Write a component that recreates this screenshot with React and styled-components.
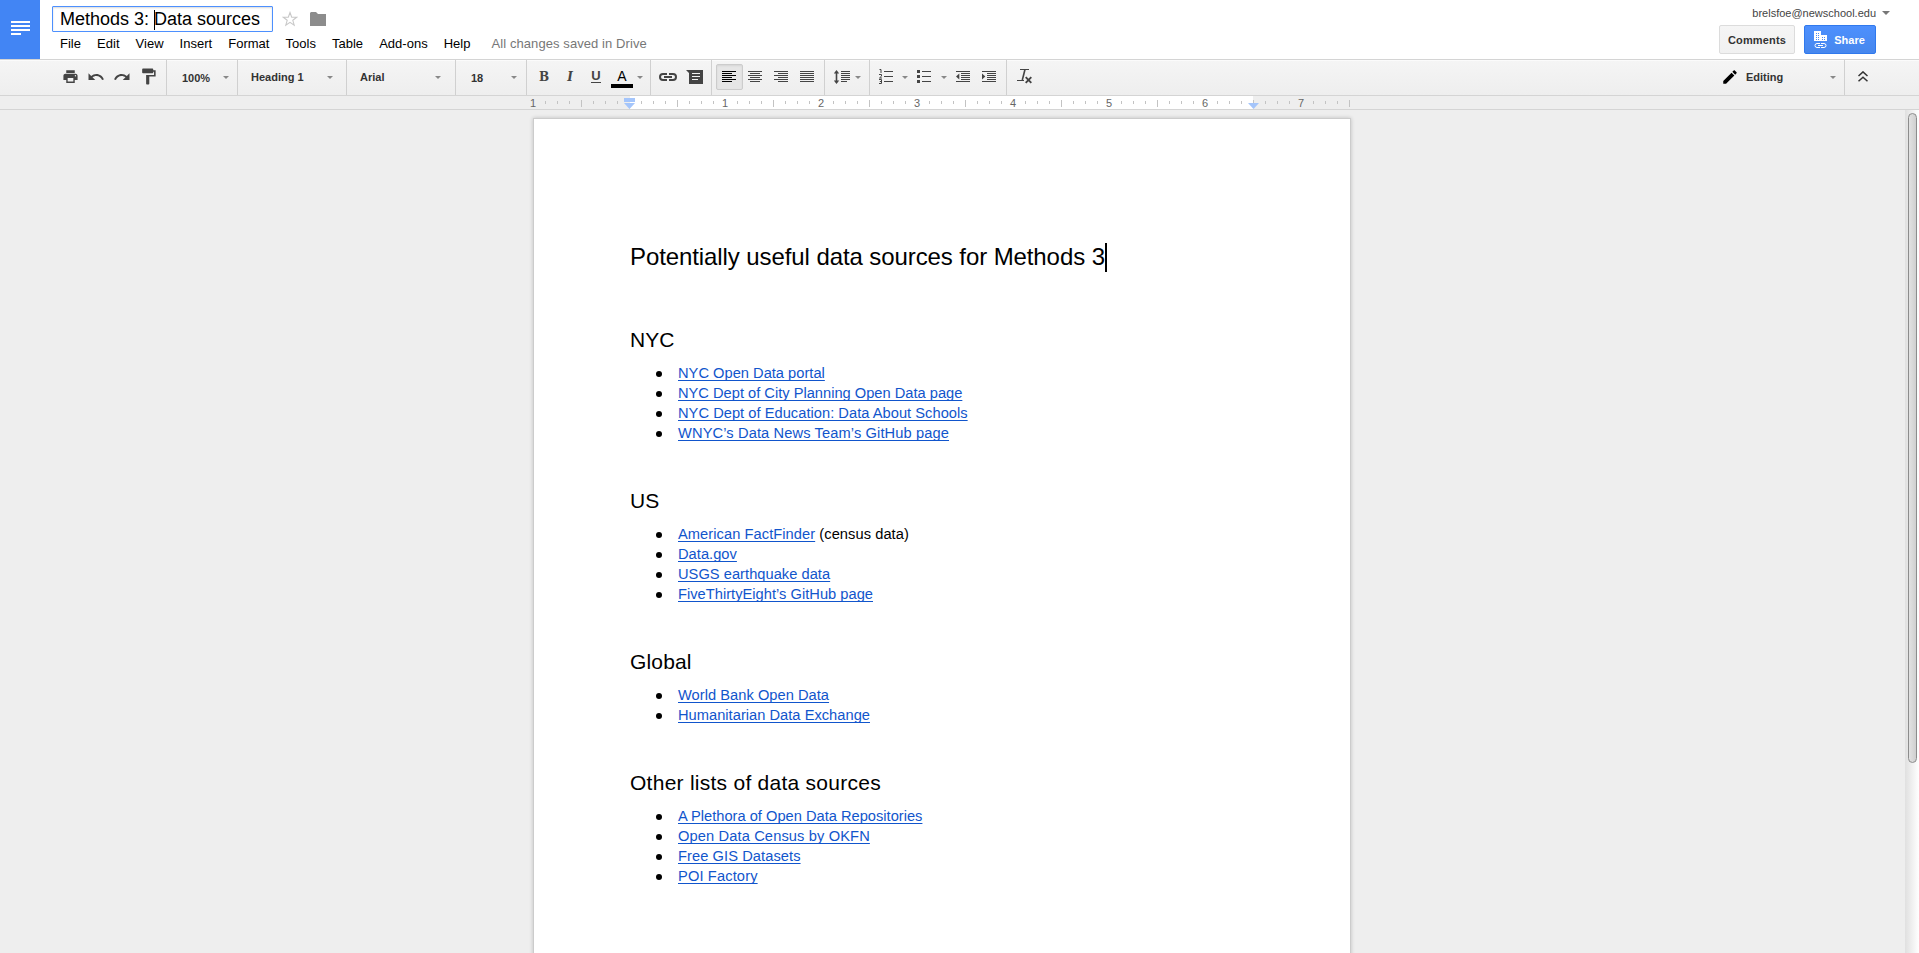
import React from 'react';
import styled, { createGlobalStyle } from 'styled-components';

const GlobalStyle = createGlobalStyle`
  * { box-sizing: border-box; }
  body { margin: 0; font-family: "Liberation Sans", Arial, sans-serif; color: #000; overflow: hidden; }
`;

const Shell = styled.div`
  display: flex;
  flex-direction: column;
  height: 953px;
  background: #eee;
`;

/* ---------- header ---------- */
const Header = styled.header`
  display: flex;
  height: 60px;
  background: #fff;
  border-bottom: 1px solid #d4d4d4;
`;
const Logo = styled.div`
  width: 40px;
  height: 59px;
  padding: 21px 0 0 11px;
  background: #4285f4;
`;
const LogoLine = styled.div`
  width: ${(p) => (p.$short ? 10 : 19)}px;
  height: 2px;
  margin-bottom: 2px;
  background: #fff;
`;
const Heading = styled.div`
  flex: 1;
  padding: 6px 0 0 12px;
`;
const TitleRow = styled.div`
  display: flex;
  align-items: center;
  height: 26px;
`;
const TitleBox = styled.div`
  display: flex;
  align-items: center;
  width: 221px;
  height: 26px;
  padding: 1px 0 0 7px;
  font-size: 18px;
  white-space: pre;
  border: 1px solid #4d90fe;
  border-radius: 1px;
  box-shadow: inset 0 1px 2px rgba(0, 0, 0, 0.15);
`;
const TitleCaret = styled.span`
  width: 1px;
  height: 20px;
  margin-right: -1px;
  background: #000;
`;
const StarIcon = styled.svg`
  margin-left: 9px;
`;
const FolderIcon = styled.svg`
  margin-left: 12px;
`;
const MenuBar = styled.nav`
  display: flex;
  height: 22px;
  font-size: 13px;
  line-height: 23px;
  letter-spacing: 0.02px;
`;
const MenuItem = styled.span`
  padding: 0 8px;
`;
const SaveStatus = styled.span`
  margin-left: 5px;
  padding-left: 8px;
  color: #777;
  letter-spacing: 0.08px;
`;
const Account = styled.div`
  display: flex;
  flex-direction: column;
  align-items: flex-end;
  padding: 4px 29px 0 0;
`;
const Email = styled.div`
  display: flex;
  align-items: center;
  gap: 6px;
  height: 18px;
  font-size: 11px;
  color: #444;
`;
const AccountActions = styled.div`
  display: flex;
  gap: 9px;
  padding: 3px 14px 0 0;
`;
const Button = styled.div`
  display: flex;
  align-items: center;
  justify-content: center;
  gap: 6px;
  width: ${(p) => (p.$primary ? 72 : 76)}px;
  height: 29px;
  padding-right: ${(p) => (p.$primary ? 1 : 0)}px;
  font-size: 11px;
  font-weight: bold;
  letter-spacing: ${(p) => (p.$primary ? 0 : 0.15)}px;
  color: ${(p) => (p.$primary ? '#fff' : '#333')};
  background: ${(p) => (p.$primary ? 'linear-gradient(#4d90fe, #4787ed)' : 'linear-gradient(#f5f5f5, #f1f1f1)')};
  border: 1px solid ${(p) => (p.$primary ? '#3079ed' : '#dcdcdc')};
  border-radius: 2px;
`;
const Triangle = styled.span`
  flex: none;
  border: ${(p) => p.$size}px solid transparent;
  border-top-color: ${(p) => p.$color || '#888'};
  border-bottom: 0;
`;

/* ---------- toolbar ---------- */
const Toolbar = styled.div`
  display: flex;
  height: 36px;
  background: linear-gradient(#f5f5f5, #eee);
  border-bottom: 1px solid #d4d4d4;
  box-shadow: inset 0 1px 0 #fbfbfb;
`;
const Group = styled.div`
  display: flex;
  align-items: center;
  width: ${(p) => p.$w}px;
  height: 35px;
  padding: 0 0 2px ${(p) => p.$pad || 0}px;
  border-right: ${(p) => (p.$last ? '0' : '1px solid #d0d0d0')};
  flex: none;
`;
const Spacer = styled.div`
  flex: 1;
`;
const Tool = styled.div`
  display: flex;
  align-items: center;
  justify-content: center;
  width: 26px;
  height: 26px;
  flex: none;
  svg { display: block; flex: none; }
`;
const ActiveTool = styled(Tool)`
  width: 27px;
  margin: 1px -1px 0 0;
  padding: 0 1px 1px 0;
  background: #e6e6e6;
  border: 1px solid #ccc;
  border-radius: 2px;
  box-shadow: inset 0 1px 2px rgba(0, 0, 0, 0.08);
`;
const SelectLabel = styled.span`
  flex: 1;
  font-size: 11px;
  font-weight: bold;
  color: #333;
  padding-top: ${(p) => (p.$low ? 2 : 0)}px;
`;
const ModeLabel = styled(SelectLabel)`
  padding-left: 7px;
`;
const SelectArrow = styled.span`
  display: flex;
  margin: 2px ${(p) => p.$right}px 0 ${(p) => p.$left}px;
`;
const Letter = styled.span`
  font-family: ${(p) => (p.$serif ? '"DejaVu Serif", serif' : '"Liberation Sans", sans-serif')};
  font-size: 12px;
  font-weight: bold;
  font-style: ${(p) => (p.$italic ? 'italic' : 'normal')};
  line-height: 14px;
  color: #444;
`;
const UnderlineLetter = styled(Letter)`
  height: 13px;
  line-height: 11px;
  border-bottom: 1px solid #444;
  font-size: 13px;
`;
const ColorTool = styled.div`
  display: flex;
  flex-direction: column;
  align-items: center;
  width: 22px;
  margin: 3px 4px 0 2px;
  font-size: 14px;
  line-height: 16px;
  border-bottom: 4px solid #000;
`;

/* ---------- ruler ---------- */
const Ruler = styled.div`
  position: relative;
  display: flex;
  height: 14px;
  padding-left: 528px;
  border-bottom: 1px solid #d4d4d4;
  background: linear-gradient(90deg, #eee 630px, #fff 630px, #fff 1253px, #eee 1253px);
`;
const Cell = styled.div`
  display: flex;
  align-items: center;
  justify-content: center;
  width: 12px;
  height: 14px;
  padding-right: ${(p) => (p.$inch ? 2 : 1)}px;
  font-size: 11px;
  color: #666;
  flex: none;
`;
const Tick = styled.i`
  width: 1px;
  height: ${(p) => (p.$half ? 7 : 3)}px;
  margin-top: ${(p) => (p.$half ? 0 : -1)}px;
  background: #c3c3c3;
`;
const Marker = styled.svg`
  position: absolute;
  left: ${(p) => p.$x}px;
  top: 2px;
`;

/* ---------- document ---------- */
const Workspace = styled.main`
  display: flex;
  flex: 1;
  min-height: 0;
  overflow: hidden;
`;
const Canvas = styled.div`
  flex: 1;
  padding: 8px 0 0 533px;
`;
const Page = styled.article`
  width: 818px;
  height: 1058px;
  padding: 124px 95px 0 96px;
  background: #fff;
  border: 1px solid #ccc;
  box-shadow: 0 0 4px rgba(0, 0, 0, 0.2);
`;
const DocTitle = styled.h1`
  display: flex;
  align-items: center;
  height: 28px;
  margin: 0 0 11px;
  font-size: 24px;
  font-weight: normal;
  line-height: 28px;
  letter-spacing: -0.09px;
  white-space: pre;
`;
const DocCaret = styled.span`
  width: 2px;
  height: 29px;
  background: #000;
`;
const Section = styled.section`
  padding-top: 45px;
`;
const SectionTitle = styled.h2`
  margin: 0 0 10px;
  font-size: 21px;
  font-weight: normal;
  line-height: 26px;
  letter-spacing: ${(p) => p.$track || 0}px;
`;
const List = styled.ul`
  margin: 0;
  padding: 0;
  list-style: none;
`;
const Item = styled.li`
  display: flex;
  align-items: center;
  height: 20px;
  padding-left: 25px;
  font-size: 14.67px;
  line-height: 20px;
  letter-spacing: ${(p) => p.$track || 0}px;
  white-space: pre;
`;
const Bullet = styled.span`
  width: 6px;
  height: 6px;
  margin: 1px 16.5px 0 0.5px;
  border-radius: 50%;
  background: #000;
`;
const Link = styled.a`
  color: #1155cc;
  text-decoration: underline;
  text-decoration-thickness: 1px;
  text-underline-offset: 2px;
  text-decoration-skip-ink: none;
`;
const ScrollTrack = styled.div`
  width: 14px;
  padding: 3px 0 0 3px;
  background: linear-gradient(90deg, #e0e0e0, #fff);
`;
const ScrollThumb = styled.div`
  width: 9px;
  height: 650px;
  border: 1px solid #8c8c8c;
  border-radius: 5px;
  background: linear-gradient(90deg, #e2e2e2, #cfcfcf);
`;

/* ---------- icons ---------- */
const Material = ({ d, size = 17, color = '#444' }) => (
  <svg width={size} height={size} viewBox="0 0 24 24" fill={color}><path d={d} /></svg>
);
const PRINT = 'M19 8H5c-1.66 0-3 1.34-3 3v6h4v4h12v-4h4v-6c0-1.66-1.34-3-3-3zm-3 11H8v-5h8v5zm3-7c-.55 0-1-.45-1-1s.45-1 1-1 1 .45 1 1-.45 1-1 1zm-1-9H6v4h12V3z';
const UNDO = 'M12.5 8c-2.65 0-5.05.99-6.9 2.6L2 7v9h9l-3.62-3.62c1.39-1.16 3.16-1.88 5.12-1.88 3.54 0 6.55 2.31 7.6 5.5l2.37-.78C21.08 11.03 17.15 8 12.5 8z';
const REDO = 'M18.4 10.6C16.55 8.99 14.15 8 11.5 8c-4.65 0-8.58 3.03-9.96 7.22L3.9 16c1.05-3.19 4.05-5.5 7.6-5.5 1.95 0 3.73.72 5.12 1.88L13 16h9V7l-3.6 3.6z';
const PAINT = 'M18 4V3c0-.55-.45-1-1-1H5c-.55 0-1 .45-1 1v4c0 .55.45 1 1 1h12c.55 0 1-.45 1-1V6h1v4H9v11c0 .55.45 1 1 1h2c.55 0 1-.45 1-1v-9h8V4h-3z';
const PENCIL = 'M3 17.25V21h3.75L17.81 9.94l-3.75-3.75L3 17.25zM20.71 7.04c.39-.39.39-1.02 0-1.41l-2.34-2.34c-.39-.39-1.02-.39-1.41 0l-1.83 1.83 3.75 3.75 1.83-1.83z';

const rows = (list, color = '#444') => list.map(([x, y, w, h = 1], i) => (
  <rect key={i} x={x} y={y} width={w} height={h} fill={color} />
));
const ALIGN = {
  left: [[0, 0, 14], [0, 2, 10], [0, 4, 14], [0, 6, 10], [0, 8, 14], [0, 10, 10]],
  center: [[0, 0, 14], [2, 2, 10], [0, 4, 14], [2, 6, 10], [0, 8, 14], [2, 10, 10]],
  right: [[0, 0, 14], [4, 2, 10], [0, 4, 14], [4, 6, 10], [0, 8, 14], [4, 10, 10]],
  full: [[0, 0, 14], [0, 2, 14], [0, 4, 14], [0, 6, 14], [0, 8, 14], [0, 10, 14]],
};
const AlignIcon = ({ kind, color }) => (
  <svg width="14" height="12" viewBox="0 0 14 12" shapeRendering="crispEdges">{rows(ALIGN[kind], color)}</svg>
);
const LinkIcon = () => (
  <svg width="18" height="8" viewBox="0 0 18 8" fill="none" stroke="#444" strokeWidth="2">
    <path d="M8 1H4a3 3 0 0 0 0 6h4M10 1h4a3 3 0 0 1 0 6h-4M5 4h8" />
  </svg>
);
const CommentIcon = () => (
  <svg width="17" height="14" viewBox="0 0 17 14">
    <path d="M0 0h17v14H3V3z" fill="#444" />
    {rows([[6, 3, 8], [6, 6, 8], [6, 9, 6]], '#f2f2f2')}
  </svg>
);
const SpacingIcon = () => (
  <svg width="16" height="14" viewBox="0 0 16 14">
    <path d="M2.5 0L5.2 3.4H3.3v7.2h1.9L2.5 14-.2 10.6h1.9V3.4H-.2z" fill="#444" />
    {rows([[7, 1, 9], [7, 3, 9], [7, 5, 9], [7, 7, 9], [7, 9, 9], [7, 11, 6]])}
  </svg>
);
const NumberedIcon = () => (
  <svg width="15" height="15" viewBox="0 0 15 15">
    <path d="M.5 .5h1.5v3.5M0 5.5h2.5v1.6L.5 9h2.5M0 10.5h2.5v4H0M.8 12.5h1.7" fill="none" stroke="#444" />
    {rows([[5, 2, 9], [5, 7, 9], [5, 12, 9]])}
  </svg>
);
const BulletedIcon = () => (
  <svg width="15" height="15" viewBox="0 0 15 15">
    {rows([[0, 1, 3, 3], [0, 6, 3, 3], [0, 11, 3, 3], [5, 2, 9], [5, 7, 9], [5, 12, 9]])}
  </svg>
);
const IndentIcon = ({ out }) => (
  <svg width="14" height="12" viewBox="0 0 14 12">
    {rows([[0, 0, 14], [5, 2, 9], [5, 4, 9], [5, 6, 9], [5, 8, 9], [0, 10, 14]])}
    <path d={out ? 'M3.3 2.5v6L0 5.5z' : 'M0 2.5v6l3.3-3z'} fill="#444" />
  </svg>
);
const ClearIcon = () => (
  <svg width="16" height="15" viewBox="0 0 16 15" fill="none" stroke="#444">
    <path d="M3 .5h9M0 11.5h7" />
    <path d="M8 .5L5.3 11" strokeWidth="1.6" />
    <path d="M8.7 8.2l5.6 5.6M14.3 8.2l-5.6 5.6" strokeWidth="1.9" />
  </svg>
);
const ChevronsUp = () => (
  <svg width="10" height="11" viewBox="0 0 10 11" fill="none" stroke="#333" strokeWidth="1.5">
    <path d="M.5 5L5 .9 9.5 5M.5 10.3L5 6.2l4.5 4.1" />
  </svg>
);
const BuildingIcon = () => (
  <svg width="14" height="17" viewBox="0 0 14 17">
    <path d="M0 0h7v4h6v6H0z" fill="#fff" />
    {rows([[2, 2, 1], [4, 2, 1], [2, 4, 1], [4, 4, 1], [2, 6, 1], [4, 6, 1], [2, 8, 1], [4, 8, 1], [8, 6, 1], [10, 6, 1], [8, 8, 1], [10, 8, 1]], '#4a8bf5')}
    <path d="M6 12.5H3a2 2 0 0 0 0 4h3M7 12.5h3a2 2 0 0 1 0 4H7M4 14.5h5" fill="none" stroke="#fff" />
  </svg>
);

const Arrow = ({ left = 0, right = 0 }) => (
  <SelectArrow $left={left} $right={right}><Triangle $size={3} /></SelectArrow>
);

const MENUS = ['File', 'Edit', 'View', 'Insert', 'Format', 'Tools', 'Table', 'Add-ons', 'Help'];

const SECTIONS = [
  {
    title: 'NYC',
    items: [
      ['NYC Open Data portal', 0.01],
      ['NYC Dept of City Planning Open Data page'],
      ['NYC Dept of Education: Data About Schools', 0.03],
      ['WNYC’s Data News Team’s GitHub page', 0.11],
    ],
  },
  {
    title: 'US',
    items: [
      ['American FactFinder', 0.06, ' (census data)'],
      ['Data.gov', 0.03],
      ['USGS earthquake data', 0.03],
      ['FiveThirtyEight’s GitHub page', 0.02],
    ],
  },
  {
    title: 'Global',
    track: 0.16,
    items: [['World Bank Open Data', 0.03], ['Humanitarian Data Exchange', 0.02]],
  },
  {
    title: 'Other lists of data sources',
    track: 0.26,
    items: [
      ['A Plethora of Open Data Repositories'],
      ['Open Data Census by OKFN', 0.12],
      ['Free GIS Datasets', 0.07],
      ['POI Factory', 0.13],
    ],
  },
];

const rulerCell = (k) => {
  if (k % 8 === 0) {
    const inch = k / 8 - 1;
    return inch === 0 ? null : Math.abs(inch);
  }
  return <Tick $half={k % 4 === 0} />;
};

export default function App() {
  return (
    <Shell>
      <GlobalStyle />
      <Header>
        <Logo>
          <LogoLine /><LogoLine /><LogoLine /><LogoLine $short />
        </Logo>
        <Heading>
          <TitleRow>
            <TitleBox>{'Methods 3: '}<TitleCaret />Data sources</TitleBox>
            <StarIcon width="16" height="16" viewBox="0 0 16 16" fill="none" stroke="#c8c8c8" strokeWidth="1.1">
              <path d="M8 1.5l1.7 4.7 5 .1-3.9 3 1.4 4.9L8 11.4l-4.2 2.8 1.4-4.9-3.9-3 5-.1z" />
            </StarIcon>
            <FolderIcon width="17" height="14" viewBox="0 0 17 14">
              <path d="M1 0h5l2 2h8v12H0V1z" fill="#8c8c8c" />
            </FolderIcon>
          </TitleRow>
          <MenuBar>
            {MENUS.map((m) => <MenuItem key={m}>{m}</MenuItem>)}
            <SaveStatus>All changes saved in Drive</SaveStatus>
          </MenuBar>
        </Heading>
        <Account>
          <Email>brelsfoe@newschool.edu<Triangle $size={4} $color="#777" /></Email>
          <AccountActions>
            <Button>Comments</Button>
            <Button $primary><BuildingIcon />Share</Button>
          </AccountActions>
        </Account>
      </Header>

      <Toolbar>
        <Group $w={167} $pad={57}>
          <Tool><Material d={PRINT} /></Tool>
          <Tool><Material d={UNDO} size={18} /></Tool>
          <Tool><Material d={REDO} size={18} /></Tool>
          <Tool><Material d={PAINT} size={19} /></Tool>
        </Group>
        <Group $w={71} $pad={15}><SelectLabel $low>100%</SelectLabel><Arrow right={8} /></Group>
        <Group $w={109} $pad={13}><SelectLabel>Heading 1</SelectLabel><Arrow right={13} /></Group>
        <Group $w={109} $pad={13}><SelectLabel>Arial</SelectLabel><Arrow right={14} /></Group>
        <Group $w={71} $pad={15}><SelectLabel $low>18</SelectLabel><Arrow right={9} /></Group>
        <Group $w={124} $pad={4}>
          <Tool><Letter $serif>B</Letter></Tool>
          <Tool><Letter $serif $italic>I</Letter></Tool>
          <Tool><UnderlineLetter>U</UnderlineLetter></Tool>
          <ColorTool>A</ColorTool>
          <Arrow />
        </Group>
        <Group $w={61} $pad={4}>
          <Tool><LinkIcon /></Tool>
          <Tool><CommentIcon /></Tool>
        </Group>
        <Group $w={113} $pad={4}>
          <ActiveTool><AlignIcon kind="left" color="#000" /></ActiveTool>
          <Tool><AlignIcon kind="center" /></Tool>
          <Tool><AlignIcon kind="right" /></Tool>
          <Tool><AlignIcon kind="full" /></Tool>
        </Group>
        <Group $w={45} $pad={4}>
          <Tool><SpacingIcon /></Tool>
          <Arrow />
        </Group>
        <Group $w={137} $pad={3}>
          <Tool><NumberedIcon /></Tool>
          <Arrow left={3} right={3} />
          <Tool><BulletedIcon /></Tool>
          <Arrow left={4} right={3} />
          <Tool><IndentIcon out /></Tool>
          <Tool><IndentIcon /></Tool>
        </Group>
        <Group $w={40} $pad={5} $last><Tool><ClearIcon /></Tool></Group>
        <Spacer />
        <Group $w={124}>
          <Material d={PENCIL} size={18} color="#000" />
          <ModeLabel>Editing</ModeLabel>
          <Arrow right={8} />
        </Group>
        <Group $w={74} $pad={5} $last><Tool><ChevronsUp /></Tool></Group>
      </Toolbar>

      <Ruler>
        {Array.from({ length: 69 }, (_, k) => (
          <Cell key={k} $inch={k % 8 === 0}>{rulerCell(k)}</Cell>
        ))}
        <Marker $x={624} width="11" height="11" viewBox="0 0 11 11">
          <path d="M0 0h11v4H0zM0 5h11L5.5 11z" fill="#a4c5fb" />
        </Marker>
        <Marker $x={1248} width="11" height="11" viewBox="0 0 11 11">
          <path d="M0 5h11L5.5 11z" fill="#a4c5fb" />
        </Marker>
      </Ruler>

      <Workspace>
        <Canvas>
          <Page>
            <DocTitle>Potentially useful data sources for Methods 3<DocCaret /></DocTitle>
            {SECTIONS.map((s) => (
              <Section key={s.title}>
                <SectionTitle $track={s.track}>{s.title}</SectionTitle>
                <List>
                  {s.items.map(([text, track, note]) => (
                    <Item key={text} $track={track}><Bullet /><Link>{text}</Link>{note}</Item>
                  ))}
                </List>
              </Section>
            ))}
          </Page>
        </Canvas>
        <ScrollTrack><ScrollThumb /></ScrollTrack>
      </Workspace>
    </Shell>
  );
}
